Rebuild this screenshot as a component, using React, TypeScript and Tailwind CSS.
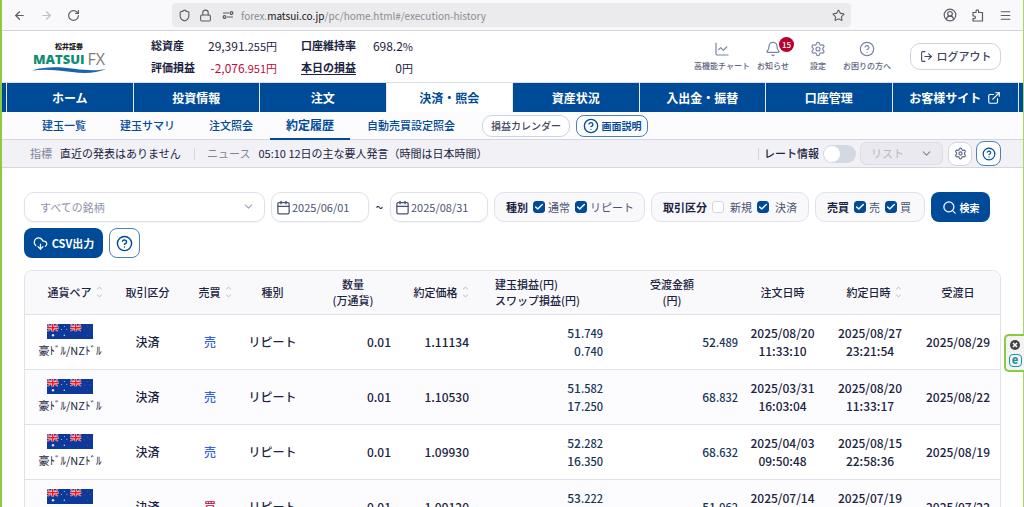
import type { ReactNode } from "react";
import {
  ArrowLeft,
  ArrowRight,
  Bell,
  Calendar,
  ChartLine,
  Check,
  ChevronDown,
  CircleUserRound,
  CloudDownload,
  ExternalLink,
  HelpCircle,
  Lock,
  LogOut,
  Menu,
  RotateCw,
  Search,
  Settings,
  Shield,
  Star,
} from "lucide-react";

const NAV = ["ホーム", "投資情報", "注文", "決済・照会", "資産状況", "入出金・振替", "口座管理", "お客様サイト"];
const SUB_NAV = ["建玉一覧", "建玉サマリ", "注文照会", "約定履歴", "自動売買設定照会"];

const TOOLS = [
  { label: "高機能チャート", icon: ChartLine, width: "w-[60px]" },
  { label: "お知らせ", icon: Bell, width: "w-[42px]", badge: 15 },
  { label: "設定", icon: Settings, width: "w-[48px]" },
  { label: "お困りの方へ", icon: HelpCircle, width: "w-[50px]" },
];

const COLUMNS = [
  { lines: ["通貨ペア"], width: "w-[90px]", sort: true, head: "pl-2.5" },
  { lines: ["取引区分"], width: "w-[65px]" },
  { lines: ["売買"], width: "w-[60px]", sort: true, head: "pl-2.5" },
  { lines: ["種別"], width: "w-[65px]" },
  { lines: ["数量", "(万通貨)"], width: "w-[96px]" },
  { lines: ["約定価格"], width: "w-[80px]", sort: true },
  { lines: ["建玉損益(円)", "スワップ損益(円)"], width: "w-[124px]", head: "text-left pl-3.5" },
  { lines: ["受渡金額", "(円)"], width: "w-[134px]" },
  { lines: ["注文日時"], width: "w-[87px]" },
  { lines: ["約定日時"], width: "w-[88px]", sort: true, head: "pl-2" },
  { lines: ["受渡日"], width: "w-[88px]" },
];

const ROWS = [
  { side: "売", price: "1.11134", pl: "51.749", swap: "0.740", amount: "52.489", ordered: ["2025/08/20", "11:33:10"], executed: ["2025/08/27", "23:21:54"], settled: "2025/08/29" },
  { side: "売", price: "1.10530", pl: "51.582", swap: "17.250", amount: "68.832", ordered: ["2025/03/31", "16:03:04"], executed: ["2025/08/20", "11:33:17"], settled: "2025/08/22" },
  { side: "売", price: "1.09930", pl: "52.282", swap: "16.350", amount: "68.632", ordered: ["2025/04/03", "09:50:48"], executed: ["2025/08/15", "22:58:36"], settled: "2025/08/19" },
  { side: "買", price: "1.09120", pl: "53.222", swap: "-1.260", amount: "51.962", ordered: ["2025/07/14", "10:12:05"], executed: ["2025/07/19", "02:41:30"], settled: "2025/07/22" },
];

// Yen amounts show the sen part one step smaller
function Amount({ value }: { value: string }) {
  const [whole, sen] = value.split(".");
  return (
    <>
      {whole}
      {sen && <span className="text-[11px]">.{sen}</span>}
    </>
  );
}

function BrowserBar() {
  return (
    <div className="flex h-[31px] items-center border-b border-[#d4d4d9] bg-[#f9f9fb] pr-[11px] pl-[11px] text-[#5b5b66]">
      <div className="flex w-[159px] shrink-0 items-center gap-3.5">
        <button aria-label="戻る"><ArrowLeft size={13} strokeWidth={2.2} /></button>
        <button aria-label="進む" className="text-[#c0c0c6]"><ArrowRight size={13} strokeWidth={2.2} /></button>
        <button aria-label="再読み込み"><RotateCw size={13} strokeWidth={2.2} /></button>
      </div>
      <div className="flex h-6 flex-1 items-center rounded bg-[#ebebed] px-1.5">
        <Shield size={13} />
        <Lock size={13} className="ml-2" />
        <svg width="12" height="8" viewBox="0 0 12 8" className="ml-2.5" fill="none" stroke="currentColor" strokeWidth="1.2">
          <path d="M1 2h6M5 6h6" />
          <circle cx="9.5" cy="2" r="1.4" />
          <circle cx="2.5" cy="6" r="1.4" />
        </svg>
        <p className="ml-[7px] flex-1 text-[10px] text-[#8a8a92]">
          forex.<span className="text-[#15141a]">matsui.co.jp</span>/pc/home.html#/execution-history
        </p>
        <Star size={13} />
      </div>
      <div className="ml-[92px] flex items-center gap-[15px]">
        <CircleUserRound size={14} />
        <svg width="12" height="13" viewBox="0 0 12 13" fill="none" stroke="currentColor" strokeWidth="1.2" strokeLinejoin="round">
          <path d="M1 5V3.5h3V2.2a1.3 1.3 0 0 1 2.6 0v1.3H10.5V12H1V9.6h1.2a1.3 1.3 0 0 0 0-2.6H1Z" />
        </svg>
        <Menu size={13} />
      </div>
    </div>
  );
}

function Logo() {
  return (
    <div className="flex w-[76px] flex-col items-center">
      <span className="text-[7px] leading-[10px] font-black text-[#222]">松井証券</span>
      <div className="flex items-center gap-[3px] leading-[16px]">
        <span className="font-['Open_Sans'] text-[13px] font-extrabold text-[#0f8f74]">MATSUI</span>
        <span className="font-['Open_Sans'] text-[16px] text-[#7d7d7d]">FX</span>
      </div>
      <svg width="74" height="6" viewBox="0 0 74 6">
        <path d="M0 3.4C16-1 29 .2 42 1.8 56 3.6 65 3.8 74 2 64 6.4 52 6.6 40 5 26 3 14 1.8 0 3.4Z" fill="#1763b0" />
      </svg>
    </div>
  );
}

function AccountHeader() {
  return (
    <header className="flex h-[51px] items-center bg-white pr-[22px] pl-[29px] text-[#1b2340]">
      <Logo />
      <dl className="ml-11 grid grid-cols-[46px_80px_77px_59px] text-right text-[12px] leading-[21px] whitespace-nowrap">
        <dt className="text-left text-[11px] font-bold">総資産</dt>
        <dd><Amount value="29,391.255" /><span className="text-[11px]">円</span></dd>
        <dt className="pl-6 text-left text-[11px] font-bold">口座維持率</dt>
        <dd>698.2<span className="text-[11px]">%</span></dd>
        <dt className="text-left text-[11px] font-bold">評価損益</dt>
        <dd className="text-[#c4083b]"><Amount value="-2,076.951" /><span className="text-[11px]">円</span></dd>
        <dt className="pl-6 text-left text-[11px] font-bold"><a href="#today" className="underline underline-offset-2">本日の損益</a></dt>
        <dd>0<span className="text-[11px]">円</span></dd>
      </dl>
      <div className="ml-auto flex text-[#7b86a3]">
        {TOOLS.map(({ label, icon: Icon, width, badge }) => (
          <a key={label} href="#tool" className={`flex flex-col items-center gap-[3px] whitespace-nowrap ${width}`}>
            <span className="relative">
              <Icon size={16} strokeWidth={1.8} />
              {badge && (
                <span className="absolute -top-1 left-3.5 flex size-[15px] items-center justify-center rounded-full bg-[#b8002c] text-[8px] leading-[15px] font-medium text-white">
                  {badge}
                </span>
              )}
            </span>
            <span className="text-[8px] leading-[12px] font-medium text-[#5d6580]">{label}</span>
          </a>
        ))}
      </div>
      <button className="ml-[18px] flex h-[27px] w-[91px] items-center justify-center gap-1 rounded-[10px] border border-[#cfd3e0] text-[11px] font-medium whitespace-nowrap text-[#3d4560]">
        <LogOut size={13} />
        ログアウト
      </button>
    </header>
  );
}

function MainNav() {
  return (
    <nav className="flex h-[30px] gap-px border-t border-[#dcdfe8] bg-[#e4e8f2]">
      <span className="w-1 bg-[#004b98]" />
      {NAV.map((label) => (
        <a
          key={label}
          href="#nav"
          className={`flex flex-1 items-center justify-center gap-1.5 text-[12px] font-bold whitespace-nowrap ${
            label === "決済・照会" ? "bg-white text-[#004b98]" : "bg-[#004b98] text-white"
          }`}
        >
          {label}
          {label === "お客様サイト" && <ExternalLink size={14} />}
        </a>
      ))}
      <span className="w-1 bg-[#004b98]" />
    </nav>
  );
}

function SubNav() {
  return (
    <nav className="flex h-7 items-center border-b border-[#d3d6e2] bg-[#fcfcff] pl-[23px] whitespace-nowrap">
      {SUB_NAV.map((label) => (
        <a
          key={label}
          href="#sub"
          className={`flex h-7 items-center text-[#004b98] ${
            label === "約定履歴" ? "border-b-2 border-[#004b98] px-4 text-[12px] font-bold" : "px-[17px] text-[11px] font-medium"
          }`}
        >
          {label}
        </a>
      ))}
      <button className="ml-2.5 h-[22px] w-[88px] rounded-[10px] border border-[#cfd3e0] bg-white text-[10px] font-medium text-[#3d4560]">
        損益カレンダー
      </button>
      <button className="ml-1.5 flex h-[22px] w-[72px] items-center justify-center gap-[3px] rounded-lg border border-[#4a80bb] bg-white text-[10px] font-bold text-[#004b98]">
        <HelpCircle size={16} />
        画面説明
      </button>
    </nav>
  );
}

function Ticker() {
  return (
    <div className="flex h-7 items-center border-b border-[#d3d6e2] bg-[#f1f1f6] pr-[22px] pl-7 text-[11px] whitespace-nowrap text-[#1b2340]">
      <span className="text-[#7e859a]">指標</span>
      <span className="ml-2 w-[125px]">直近の発表はありません</span>
      <span className="ml-[9px] h-3 w-px bg-[#d3d6e2]" />
      <span className="ml-3 text-[#7e859a]">ニュース</span>
      <span className="ml-2">05:10 12日の主な要人発言（時間は日本時間）</span>
      <span className="ml-auto h-3 w-px bg-[#d3d6e2]" />
      <label className="ml-[5px] flex items-center gap-1 font-medium">
        レート情報
        <input
          type="checkbox"
          role="switch"
          className="h-[18px] w-[33px] appearance-none rounded-full bg-[#d3d9e2] p-px before:block before:size-4 before:rounded-full before:bg-white checked:bg-[#004b98] checked:before:ml-auto"
        />
      </label>
      <div className="relative ml-1">
        <select disabled aria-label="表示形式" className="block h-[23px] w-[83px] appearance-none rounded-md border border-[#dcdde6] bg-[#e9e9ef] pl-2.5 text-[11px] text-[#b4b8c6] opacity-100">
          <option>リスト</option>
        </select>
        <ChevronDown size={13} className="pointer-events-none absolute top-[5px] right-2.5 text-[#7b86a3]" />
      </div>
      <button aria-label="表示設定" className="ml-[5px] flex size-6 items-center justify-center rounded-lg border border-[#d3d6e2] bg-white text-[#5d6580]">
        <Settings size={13} />
      </button>
      <button aria-label="ヘルプ" className="ml-1 flex size-[25px] items-center justify-center rounded-lg border border-[#4a80bb] bg-white text-[#004b98]">
        <HelpCircle size={14} />
      </button>
    </div>
  );
}

function CheckItem({ label, checked = false, wide = false }: { label: string; checked?: boolean; wide?: boolean }) {
  return (
    <label className={`flex items-center text-[#4a5270] ${wide ? "gap-1.5" : "gap-[3px]"}`}>
      <span className="relative size-3">
        <input
          type="checkbox"
          defaultChecked={checked}
          className="peer block size-3 appearance-none rounded-[3px] border border-[#d3d6e2] bg-white checked:border-[#004b98] checked:bg-[#004b98]"
        />
        <Check size={10} strokeWidth={3.5} className="pointer-events-none absolute top-px left-px hidden text-white peer-checked:block" />
      </span>
      {label}
    </label>
  );
}

function FilterGroup({ title, width, children }: { title: string; width: string; children: ReactNode }) {
  return (
    <div role="group" aria-label={title} className={`flex h-[30px] items-center gap-[5px] rounded-[10px] border border-[#e0e2ea] bg-[#f9f9fc] pl-[11px] ${width}`}>
      <span className="font-bold text-[#1b2340]">{title}</span>
      {children}
    </div>
  );
}

function DateField({ label, value }: { label: string; value: string }) {
  return (
    <label className="flex h-[30px] w-[98px] items-center gap-px rounded-[10px] border border-[#e0e2ea] bg-white pl-1 text-[#4a5270] shadow-xs">
      <Calendar size={15} className="shrink-0" />
      <input type="text" aria-label={label} defaultValue={value} className="w-[68px] text-[11px] outline-none" />
    </label>
  );
}

function Filters() {
  return (
    <form className="flex flex-wrap items-center gap-1.5 text-[11px] whitespace-nowrap" onSubmit={(e) => e.preventDefault()}>
      <div className="relative">
        <select aria-label="銘柄" className="block h-[30px] w-[241px] appearance-none rounded-[10px] border border-[#e0e2ea] bg-white pl-[15px] text-[11px] text-[#8d93a8] shadow-xs">
          <option>すべての銘柄</option>
        </select>
        <ChevronDown size={13} className="pointer-events-none absolute top-2 right-2.5 text-[#9aa0b5]" />
      </div>
      <DateField label="開始日" value="2025/06/01" />
      <span className="w-[9px] text-center text-[14px] text-[#1b2340]">~</span>
      <DateField label="終了日" value="2025/08/31" />
      <FilterGroup title="種別" width="w-[151px]">
        <CheckItem label="通常" checked />
        <CheckItem label="リピート" checked />
      </FilterGroup>
      <FilterGroup title="取引区分" width="w-[158px]">
        <CheckItem label="新規" wide />
        <CheckItem label="決済" checked wide />
      </FilterGroup>
      <FilterGroup title="売買" width="w-[110px]">
        <CheckItem label="売" checked />
        <CheckItem label="買" checked />
      </FilterGroup>
      <button className="flex h-[30px] w-[59px] items-center justify-center gap-[3px] rounded-lg bg-[#004b98] text-[10px] font-bold text-white">
        <Search size={15} />
        検索
      </button>
      <button type="button" className="flex h-[30px] w-[79px] items-center justify-center gap-1 rounded-lg bg-[#004b98] text-[11px] font-bold text-white">
        <CloudDownload size={15} />
        CSV出力
      </button>
      <button type="button" aria-label="ヘルプ" className="flex h-[30px] w-[31px] items-center justify-center rounded-lg border border-[#4a80bb] bg-white text-[#004b98]">
        <HelpCircle size={17} />
      </button>
    </form>
  );
}

function Sort() {
  return (
    <svg width="7" height="12" viewBox="0 0 7 12" fill="none" stroke="#b4b9c8" strokeWidth="1">
      <path d="M1.2 3.2 3.5 1.2l2.3 2M1.2 8.8l2.3 2 2.3-2" />
    </svg>
  );
}

function Union() {
  return (
    <>
      <path d="m.5.3 10.5 6.9M11 .3.5 7.2" stroke="#f3c3cf" strokeWidth="1.5" />
      <path d="m.5.3 10.5 6.9M11 .3.5 7.2" stroke="#ee2a3a" strokeWidth=".8" />
      <path d="M5.75 0v7.5M0 3.75h11.5" stroke="#fff" strokeWidth="2.6" />
      <path d="M5.75 0v7.5M0 3.75h11.5" stroke="#f01c25" strokeWidth="1.6" />
    </>
  );
}

function Flags() {
  return (
    <svg width="46" height="15" viewBox="0 0 46 15" className="mx-auto block" role="img" aria-label="豪ドル ニュージーランドドル">
      <path d="M0 0h46v15H0z" fill="#0b3a9b" />
      <Union />
      <svg x="23" width="11.5" height="7.5"><Union /></svg>
      <g fill="#dfe6f5">
        <circle cx="6" cy="11.3" r="1.2" />
        <circle cx="17.3" cy="2.5" r=".5" />
        <circle cx="14.4" cy="5.6" r=".5" />
        <circle cx="19.8" cy="5.2" r=".5" />
        <circle cx="17.3" cy="11.3" r=".7" />
      </g>
      <g fill="#8a2a68">
        <circle cx="40.6" cy="2.8" r=".7" />
        <circle cx="37.8" cy="6" r=".7" />
        <circle cx="43.2" cy="5.4" r=".7" />
        <circle cx="40.6" cy="11.5" r=".8" />
      </g>
    </svg>
  );
}

function HistoryTable() {
  return (
    <div className="mt-3 overflow-hidden rounded-t-lg border border-[#e0e2ea]">
      <table className="w-full table-fixed border-collapse text-center text-[12px] font-medium whitespace-nowrap text-[#1b2340]">
        <colgroup>
          {COLUMNS.map((c) => (
            <col key={c.lines[0]} className={c.width} />
          ))}
        </colgroup>
        <thead className="bg-[#f9f9fc] text-[11px] leading-[16px]">
          <tr className="h-[43px] border-b border-[#e0e2ea]">
            {COLUMNS.map((c) => (
              <th key={c.lines[0]} scope="col" className={`font-medium ${c.head ?? ""}`}>
                <span className="inline-flex items-center gap-1">
                  <span>
                    {c.lines.map((line) => (
                      <span key={line} className="block">{line}</span>
                    ))}
                  </span>
                  {c.sort && <Sort />}
                </span>
              </th>
            ))}
          </tr>
        </thead>
        <tbody className="leading-[18px]">
          {ROWS.map((row) => (
            <tr key={row.price} className="h-[55px] border-b border-[#e0e2ea] bg-white even:bg-[#fcfcff]">
              <td>
                <Flags />
                <span className="mt-0.5 block text-[11px] font-normal">豪ﾄﾞﾙ/NZﾄﾞﾙ</span>
              </td>
              <td>決済</td>
              <td className={row.side === "売" ? "text-[#3563dd]" : "text-[#c4083b]"}>{row.side}</td>
              <td>リピート</td>
              <td className="pr-2.5 text-right">0.01</td>
              <td className="pr-3 text-right">{row.price}</td>
              <td className="pr-0.5 text-right text-[#173657]">
                <div><Amount value={row.pl} /></div>
                <div><Amount value={row.swap} /></div>
              </td>
              <td className="pr-px text-right text-[#173657]"><Amount value={row.amount} /></td>
              <td>{row.ordered[0]}<br />{row.ordered[1]}</td>
              <td>{row.executed[0]}<br />{row.executed[1]}</td>
              <td>{row.settled}</td>
            </tr>
          ))}
        </tbody>
      </table>
    </div>
  );
}

// Browser extension tab pinned to the right edge
function SideTab() {
  return (
    <div className="fixed top-[334px] right-0 flex h-[38px] w-5 flex-col items-center justify-center gap-1 rounded-l-[5px] border-2 border-r-0 border-[#8ccb3f] bg-[#f3f3f3]">
      <button aria-label="閉じる">
        <svg width="10" height="10" viewBox="0 0 10 10" className="block">
          <circle cx="5" cy="5" r="5" fill="#444" />
          <path d="m3 3 4 4M7 3 3 7" stroke="#fff" strokeWidth="1.6" />
        </svg>
      </button>
      <span className="flex size-[13px] items-center justify-center rounded-[4px] border border-[#1d959c] pb-0.5 text-[11px] leading-[12px] font-black text-[#1d959c]">
        e
      </span>
    </div>
  );
}

export default function App() {
  return (
    <div lang="ja" className="h-screen overflow-hidden border-r border-l-2 border-r-[#a5d866] border-l-[#8ccb3f] bg-white font-['Noto_Sans_CJK_JP',sans-serif]">
      <BrowserBar />
      <AccountHeader />
      <MainNav />
      <SubNav />
      <Ticker />
      <main className="pt-6 pr-[22px] pl-[22px]">
        <Filters />
        <HistoryTable />
      </main>
      <SideTab />
    </div>
  );
}
